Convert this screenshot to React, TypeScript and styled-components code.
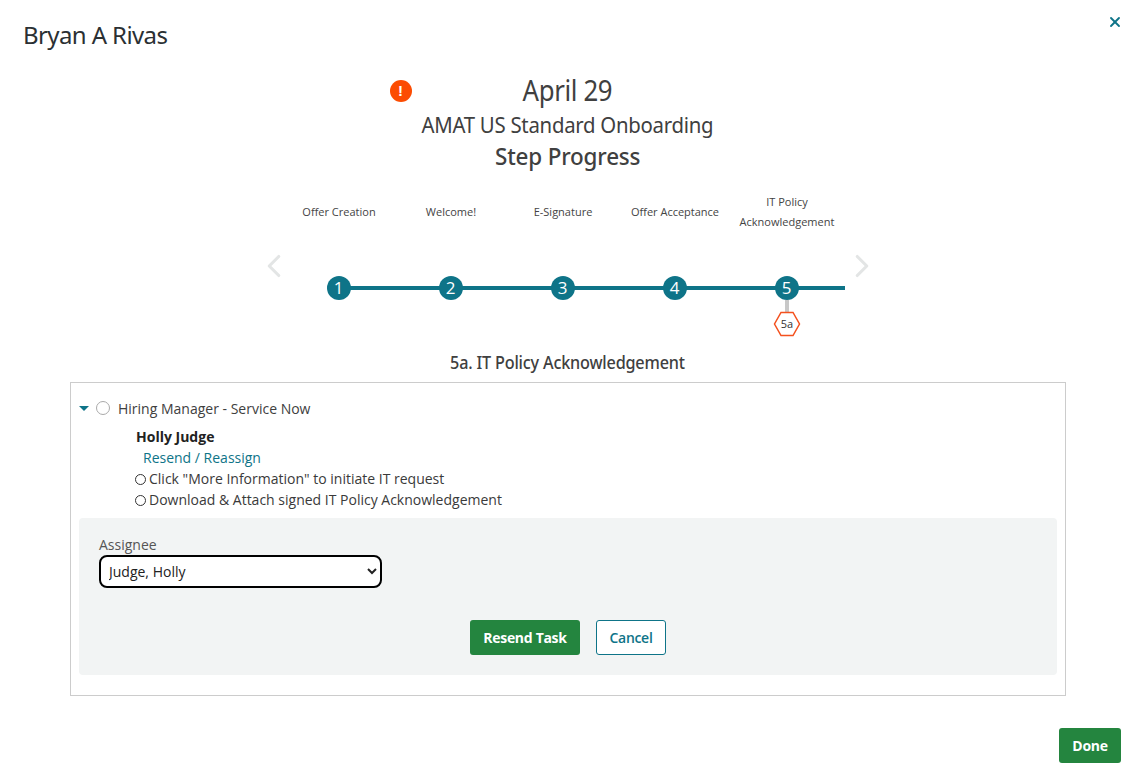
import styled, { createGlobalStyle } from "styled-components";
import { ChevronLeft, ChevronRight, X } from "lucide-react";

const steps = [
  { id: 1, label: "Offer Creation" },
  { id: 2, label: "Welcome!" },
  { id: 3, label: "E-Signature" },
  { id: 4, label: "Offer Acceptance" },
  { id: 5, label: "IT Policy Acknowledgement" },
];

export default function App() {
  return (
    <Modal>
      <GlobalStyle />
      <Header>
        <Name>Bryan A Rivas</Name>
        <CloseBtn aria-label="close">
          <X size={16} strokeWidth={2.8} />
        </CloseBtn>
      </Header>
      <Summary>
        <DateRow>
          <AlertDot>!</AlertDot>
          <DateText>April 29</DateText>
        </DateRow>
        <Flow>AMAT US Standard Onboarding</Flow>
        <Progress>Step Progress</Progress>
      </Summary>
      <Stepper>
        <Arrow>
          <ChevronLeft size={38} strokeWidth={2} />
        </Arrow>
        <Track>
          {steps.map((step) => (
            <Step key={step.id}>
              <StepLabel>{step.label}</StepLabel>
              <Circle>{step.id}</Circle>
              {step.id === 5 && (
                <>
                  <Stem />
                  <SubStep>
                    <svg width="28" height="26" viewBox="0 0 28 26">
                      <polygon points="8,1.5 20,1.5 26.5,13 20,24.5 8,24.5 1.5,13" fill="#fff" stroke="#f4511e" strokeWidth="1.5" />
                    </svg>
                    <SubStepText>5a</SubStepText>
                  </SubStep>
                </>
              )}
            </Step>
          ))}
        </Track>
        <Arrow>
          <ChevronRight size={38} strokeWidth={2} />
        </Arrow>
      </Stepper>
      <SubTitle>
        <SubTitleText>5a. IT Policy Acknowledgement</SubTitleText>
      </SubTitle>
      <Card>
        <TaskRow>
          <Caret />
          <Radio />
          <span>Hiring Manager - Service Now</span>
        </TaskRow>
        <TaskBody>
          <Person>Holly Judge</Person>
          <ResendLink>Resend / Reassign</ResendLink>
          <Item>
            <SmallCircle />
            Click "More Information" to initiate IT request
          </Item>
          <Item>
            <SmallCircle />
            Download &amp; Attach signed IT Policy Acknowledgement
          </Item>
        </TaskBody>
        <Panel>
          <FieldLabel>Assignee</FieldLabel>
          <Select defaultValue="holly">
            <option value="holly">Judge, Holly</option>
          </Select>
          <PanelActions>
            <PrimaryBtn>Resend Task</PrimaryBtn>
            <OutlineBtn>Cancel</OutlineBtn>
          </PanelActions>
        </Panel>
      </Card>
      <Footer>
        <PrimaryBtn $small>Done</PrimaryBtn>
      </Footer>
    </Modal>
  );
}

const GlobalStyle = createGlobalStyle`
  html, body {
    margin: 0;
    padding: 0;
    background: #fff;
  }
  body {
    font-family: "Open Sans", "Noto Sans", sans-serif;
    color: #333;
    overflow: hidden;
  }
`;

const headingFont = `"Noto Sans", "Open Sans", sans-serif`;

const Modal = styled.div`
  width: 1135px;
  height: 773px;
  box-sizing: border-box;
  padding: 0 14px 0 0;
  display: flex;
  flex-direction: column;
  align-items: center;
`;

const Header = styled.div`
  width: 100%;
  height: 70px;
  display: flex;
  justify-content: space-between;
  align-items: flex-start;
  padding-left: 23px;
  box-sizing: border-box;
`;

const Name = styled.h1`
  margin: 19px 0 0;
  font-family: ${headingFont};
  font-size: 24px;
  line-height: 32px;
  font-weight: 400;
  letter-spacing: -0.6px;
  color: #2b3033;
`;

const CloseBtn = styled.button`
  margin: 14px -2px 0 0;
  padding: 0;
  border: 0;
  background: none;
  color: #0e7488;
  display: flex;
`;

const Summary = styled.div`
  width: 100%;
  padding-left: 14px;
  box-sizing: border-box;
  display: flex;
  flex-direction: column;
  align-items: center;
  color: #404040;
`;

const DateRow = styled.div`
  position: relative;
  display: flex;
  justify-content: center;
  width: 356px;
`;

const AlertDot = styled.span`
  position: absolute;
  left: 0;
  top: 10px;
  width: 22px;
  height: 22px;
  border-radius: 50%;
  background: #fc4c02;
  color: #fff;
  font-family: "Liberation Sans", sans-serif;
  font-weight: 700;
  font-size: 15px;
  line-height: 22px;
  text-align: center;
`;

const DateText = styled.div`
  font-family: ${headingFont};
  font-size: 29px;
  line-height: 40px;
  letter-spacing: -0.4px;
  transform: scaleX(0.89);
`;

const Flow = styled.div`
  font-family: ${headingFont};
  font-size: 21px;
  line-height: 30px;
  letter-spacing: -0.28px;
  transform: scaleX(0.97);
`;

const Progress = styled.div`
  font-family: ${headingFont};
  font-size: 24px;
  line-height: 32px;
  letter-spacing: -0.2px;
  font-weight: 500;
  transform: scaleX(0.935);
`;

const Stepper = styled.div`
  width: 100%;
  padding-left: 14px;
  box-sizing: border-box;
  margin-top: 10px;
  display: flex;
  justify-content: center;
  align-items: flex-start;
`;

const Arrow = styled.div`
  width: 30px;
  margin-top: 65px;
  color: #e3e5e5;
  display: flex;
  justify-content: center;

  svg {
    flex-shrink: 0;
  }
`;

const Track = styled.div`
  width: 560px;
  margin: 0 4px 0 -6px;
  display: grid;
  grid-template-columns: repeat(5, 112px);
`;

const Step = styled.div`
  position: relative;
  display: flex;
  flex-direction: column;
  align-items: center;

  &::after {
    content: "";
    position: absolute;
    left: 56px;
    top: 104px;
    width: 114px;
    height: 4px;
    background: #0e7488;
  }

  &:last-child::after {
    width: 58px;
  }
`;

const StepLabel = styled.div`
  height: 60px;
  width: 112px;
  box-sizing: border-box;
  padding-left: 1px;
  display: flex;
  align-items: center;
  justify-content: center;
  text-align: center;
  font-size: 11px;
  line-height: 20px;
  color: #444;
`;

const Circle = styled.div`
  position: relative;
  z-index: 1;
  margin-top: 34px;
  width: 24px;
  height: 24px;
  border-radius: 50%;
  background: #0e7488;
  color: #fff;
  font-size: 17px;
  line-height: 24px;
  text-align: center;
`;

const Stem = styled.div`
  width: 4px;
  height: 12px;
  background: #c8c8c8;
`;

const SubStep = styled.div`
  position: relative;
  width: 28px;
  height: 26px;
  margin-top: -1px;
  svg {
    display: block;
  }
`;

const SubStepText = styled.span`
  position: absolute;
  inset: 0;
  padding-left: 1px;
  font-size: 11px;
  line-height: 26px;
  text-align: center;
  color: #333;
`;

const SubTitle = styled.h2`
  width: 100%;
  box-sizing: border-box;
  padding-left: 14px;
  margin: 12px 0 0;
  text-align: center;
  font-family: ${headingFont};
  font-weight: 500;
  font-size: 18px;
  line-height: 26px;
  letter-spacing: -0.2px;
  color: #404040;
`;

const SubTitleText = styled.span`
  display: inline-block;
  transform: scaleX(0.9);
`;

const Card = styled.div`
  width: 996px;
  height: 314px;
  margin: 7px 0 0 70px;
  box-sizing: border-box;
  border: 1px solid #ccc;
  padding: 14px 8px 0;
  align-self: flex-start;
`;

const TaskRow = styled.div`
  display: flex;
  align-items: center;
  height: 22px;
  font-size: 14px;
  color: #404040;
`;

const Caret = styled.span`
  width: 0;
  height: 0;
  margin-right: 7px;
  border-left: 5px solid transparent;
  border-right: 5px solid transparent;
  border-top: 5px solid #0e7488;
`;

const Radio = styled.span`
  width: 12px;
  height: 12px;
  margin-right: 8px;
  border: 1px solid #aaa;
  border-radius: 50%;
`;

const TaskBody = styled.div`
  margin: 7px 0 0 56px;
  font-size: 14px;
  line-height: 21px;
  color: #3a3a3a;
`;

const Person = styled.div`
  margin-left: 1px;
  font-weight: 700;
  color: #222;
`;

const ResendLink = styled.a`
  display: block;
  margin-left: 8px;
  color: #0e7488;
`;

const Item = styled.div`
  display: flex;
  align-items: center;
  gap: 3px;
`;

const SmallCircle = styled.span`
  width: 9px;
  height: 9px;
  margin-top: 2px;
  border: 1px solid #333;
  border-radius: 50%;
`;

const Panel = styled.div`
  height: 157px;
  margin-top: 8px;
  padding: 17px 20px 0;
  box-sizing: border-box;
  background: #f2f4f4;
  border-radius: 4px;
`;

const FieldLabel = styled.div`
  font-size: 14px;
  line-height: 19px;
  color: #555;
`;

const Select = styled.select`
  display: block;
  width: 283px;
  height: 33px;
  box-sizing: border-box;
  margin-top: 1px;
  padding: 0 4px;
  border: 2px solid #000;
  border-radius: 8px;
  background: #fff;
  font-family: "Open Sans", sans-serif;
  font-size: 14px;
  color: #222;
`;

const PanelActions = styled.div`
  margin-top: 32px;
  display: flex;
  justify-content: center;
  gap: 16px;
`;

const PrimaryBtn = styled.button<{ $small?: boolean }>`
  width: ${(p) => (p.$small ? "62px" : "110px")};
  height: 35px;
  padding: 0;
  border: 0;
  border-radius: 3px;
  background: #24853f;
  color: #fff;
  font-family: "Open Sans", sans-serif;
  font-size: 14px;
  font-weight: 700;
  letter-spacing: -0.3px;
`;

const OutlineBtn = styled.button`
  width: 70px;
  height: 35px;
  padding: 0;
  border: 1px solid #0e7488;
  border-radius: 3px;
  background: #fff;
  color: #0e7488;
  font-family: "Open Sans", sans-serif;
  font-size: 14px;
  font-weight: 600;
  letter-spacing: -0.3px;
`;

const Footer = styled.div`
  width: 100%;
  margin-top: 32px;
  display: flex;
  justify-content: flex-end;
`;
